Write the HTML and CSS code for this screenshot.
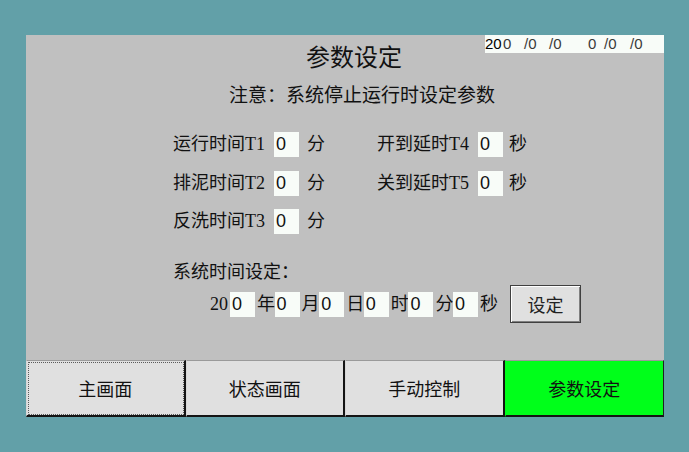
FILE: index.html
```html
<!DOCTYPE html>
<html lang="zh-CN">
<head>
<meta charset="utf-8">
<title>参数设定</title>
<link rel="stylesheet" href="styles.css">
</head>
<body>
<div class="panel">
  <div class="header">
    <div class="title">参数设定</div>
    <div class="clock">
      <span class="ck ck-yr">20</span><span class="ck ck-a">0</span><span class="ck ck-b">/0</span><span class="ck ck-c">/0</span><span class="ck ck-d">0</span><span class="ck ck-e">/0</span><span class="ck ck-f">/0</span>
    </div>
  </div>
  <div class="notice">注意：系统停止运行时设定参数</div>
  <div class="fields">
    <div class="field"><span class="label">运行时间T1</span><span class="box">0</span><span class="unit">分</span></div>
    <div class="field"><span class="label">开到延时T4</span><span class="box">0</span><span class="unit unit-s">秒</span></div>
    <div class="field"><span class="label">排泥时间T2</span><span class="box">0</span><span class="unit">分</span></div>
    <div class="field"><span class="label">关到延时T5</span><span class="box">0</span><span class="unit unit-s">秒</span></div>
    <div class="field"><span class="label">反洗时间T3</span><span class="box">0</span><span class="unit">分</span></div>
  </div>
  <div class="sys-label">系统时间设定：</div>
  <div class="date-row">
    <span class="yr">20</span><span class="box">0</span><span class="du">年</span><span class="box">0</span><span class="du">月</span><span class="box">0</span><span class="du">日</span><span class="box">0</span><span class="du">时</span><span class="box">0</span><span class="du">分</span><span class="box">0</span><span class="du">秒</span>
    <button class="set-btn">设定</button>
  </div>
  <nav class="nav">
    <button class="nav-btn focused">主画面</button>
    <button class="nav-btn">状态画面</button>
    <button class="nav-btn">手动控制</button>
    <button class="nav-btn active">参数设定</button>
  </nav>
</div>
</body>
</html>
```

FILE: styles.css
```css
html, body {
  margin: 0;
  padding: 0;
}
body {
  background: #62a0a8;
  width: 689px;
  height: 452px;
  overflow: hidden;
  font-family: "Liberation Serif", "Noto Sans CJK SC", serif;
  color: #111;
}
.panel {
  margin: 35px 0 0 26px;
  width: 638px;
  height: 382px;
  background: #c0c0c0;
  display: flex;
  flex-direction: column;
}
.header {
  display: flex;
  align-items: flex-start;
  height: 33px;
}
.title {
  margin: 9px 0 0 280px;
  font-size: 24px;
  line-height: 24px;
  font-family: "Noto Sans CJK SC", sans-serif;
}
.clock {
  margin-left: auto;
  width: 179px;
  height: 18px;
  background: #f8fcf8;
  display: flex;
  align-items: center;
  font-family: "Liberation Sans", sans-serif;
  font-size: 15px;
  line-height: 18px;
  color: #3a3a3a;
}
.ck { display: inline-block; }
.ck-yr { width: 18px; color: #000; }
.ck-a { width: 21px; }
.ck-b { width: 25px; }
.ck-c { width: 39px; }
.ck-d { width: 16px; }
.ck-e { width: 26px; }
.notice {
  margin: 16px 0 0 203px;
  font-size: 19px;
  line-height: 19px;
  font-family: "Noto Sans CJK SC", sans-serif;
}
.fields {
  margin: 29px 0 0 147px;
  display: grid;
  grid-template-columns: 204px auto;
  grid-auto-rows: 25px;
  row-gap: 13.5px;
}
.field {
  display: flex;
  align-items: center;
  font-size: 18px;
  line-height: 25px;
}
.label {
  width: 101px;
  white-space: nowrap;
}
.box {
  width: 25px;
  height: 25px;
  background: #f8fcf8;
  font-family: "Liberation Sans", sans-serif;
  font-size: 18px;
  line-height: 25px;
  padding-left: 2px;
  box-sizing: border-box;
  color: #111;
}
.unit {
  margin-left: 8px;
}
.unit-s {
  margin-left: 6px;
}
.sys-label {
  margin: 26px 0 0 147px;
  font-size: 18px;
  line-height: 25px;
}
.date-row {
  margin: 0 0 0 184px;
  height: 38px;
  display: flex;
  align-items: center;
  font-size: 18px;
  line-height: 25px;
}
.yr {
  width: 20px;
}
.du {
  width: 19.6px;
  padding-left: 2px;
  box-sizing: border-box;
  white-space: nowrap;
}
.set-btn {
  margin-left: 12.4px;
  width: 71px;
  height: 38px;
  background: #e0e0e0;
  border: 1px solid #404040;
  box-shadow: inset 1px 1px 0 #ffffff, inset -1px -1px 0 #808080;
  font-family: "Noto Sans CJK SC", sans-serif;
  font-size: 18px;
  color: #222;
  padding: 0;
}
.nav {
  margin-top: auto;
  height: 57px;
  display: grid;
  grid-template-columns: repeat(4, 1fr);
}
.nav-btn {
  margin: 0;
  padding: 0;
  background: #e0e0e0;
  border-top: 1px solid #9a9a9a;
  border-left: 1px solid #d6d6d6;
  border-right: 2px solid #141414;
  border-bottom: 2px solid #141414;
  font-family: "Noto Sans CJK SC", sans-serif;
  font-size: 18px;
  color: #111;
}
.nav-btn.focused {
  outline: 1px dotted #5a5a5a;
  outline-offset: -3px;
}
.nav-btn.active {
  background: #00ff1a;
  border-right: 1px solid #202020;
  border-left: 1px solid #00ff1a;
}
```
